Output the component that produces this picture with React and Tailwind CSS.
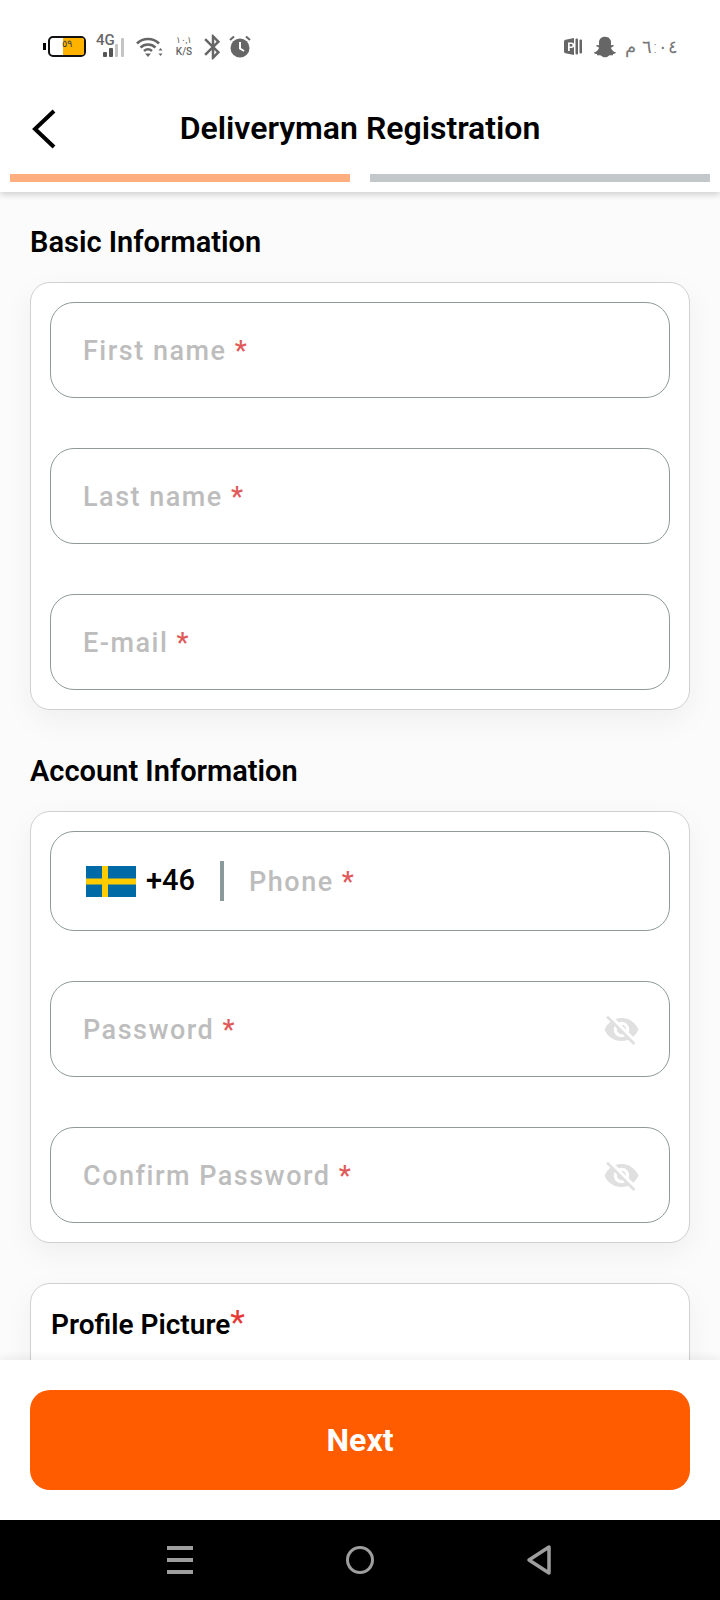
import React from 'react';
import { MdVisibilityOff, MdBluetooth } from 'react-icons/md';
import { FaSnapchatGhost } from 'react-icons/fa';

const Required = ({ children }) => (
  <>
    {children} <span className="text-[#e05a5a]">*</span>
  </>
);

const Field = ({ label, secret }) => (
  <div className="flex h-[96px] items-center justify-between rounded-[24px] border border-[#8f9a9a] bg-white pl-[32px] pr-[29px]">
    <span className="pt-[2px] text-[27px] font-medium tracking-[1.5px] text-[#bdbdbd]">
      <Required>{label}</Required>
    </span>
    {secret && <MdVisibilityOff size={37} className="text-[#e0e0e0]" />}
  </div>
);

const SwedenFlag = () => (
  <svg width="50" height="31" viewBox="0 0 50 31">
    <rect width="50" height="31" fill="#006aa7" />
    <rect x="16" width="6" height="31" fill="#fecc00" />
    <rect y="12.5" width="50" height="6" fill="#fecc00" />
  </svg>
);

const Battery = () => (
  <div className="flex items-center gap-[2px]">
    <div className="h-[7px] w-[3px] bg-black" />
    <div className="relative h-[21px] w-[38px] rounded-[5px] border-2 border-[#111] bg-white">
      <div className="absolute bottom-0 right-0 top-0 w-[21px] rounded-r-[2px] bg-[#ffb300]" />
      <span className="absolute left-[12px] top-[-1px] text-[10px] leading-[14px] text-[#444]">٥٩</span>
    </div>
  </div>
);

const Signal = () => (
  <div className="relative h-[22px] w-[29px]">
    <span className="absolute left-0 top-[-4px] text-[15px] font-medium leading-[16px] text-[#666]">4G</span>
    <svg width="29" height="22" viewBox="0 0 29 22">
      <rect x="7" y="16" width="4" height="5" rx="1" fill="#555" />
      <rect x="13" y="12" width="4" height="9" rx="1" fill="#555" />
      <rect x="19" y="8" width="3" height="13" rx="1" fill="#c4c4c4" />
      <rect x="25" y="2" width="3" height="19" rx="1" fill="#c4c4c4" />
    </svg>
  </div>
);

const Wifi = () => (
  <svg width="27" height="22" viewBox="0 0 27 22">
    <path d="M1 7.5C7 1.5 17 1.5 23 7.5" stroke="#666" strokeWidth="2.6" fill="none" />
    <path d="M4.5 11.5C8.5 7.5 15.5 7.5 19.5 11.5" stroke="#666" strokeWidth="2.6" fill="none" />
    <path d="M8 15C10.5 12.8 13.5 12.8 16 15" stroke="#666" strokeWidth="2.6" fill="none" />
    <path d="M9 17.5h6L12 21z" fill="#666" />
    <path d="M22.5 14.5l2-2.5 2 2.5zM22.5 17.5h4l-2 2.5z" fill="#666" />
  </svg>
);

const Alarm = () => (
  <svg width="22" height="23" viewBox="0 0 22 23">
    <circle cx="11" cy="13" r="9.5" fill="#666" />
    <path d="M11 7v6.5l4 2.5" stroke="#fff" strokeWidth="2" fill="none" />
    <path d="M1 5l4-3.5M21 5l-4-3.5" stroke="#666" strokeWidth="2" fill="none" />
  </svg>
);

const ParkIcon = () => (
  <svg width="19" height="19" viewBox="0 0 19 19">
    <path d="M0 4.5Q0 3 1.5 2.7L10 1v17l-8.5-1.7Q0 16 0 14.5z" fill="#666" />
    <path d="M4 5.5h3.5a2.7 2.7 0 0 1 0 5.4H5.7V14H4zM5.7 7v2.4h1.6a1.2 1.2 0 0 0 0-2.4z" fill="#fff" fillRule="evenodd" />
    <rect x="11.5" y="1.5" width="2.5" height="16" rx="1" fill="#666" />
    <rect x="15.5" y="2.5" width="2.5" height="14" rx="1" fill="#666" />
  </svg>
);

const StatusBar = () => (
  <div className="flex h-[94px] items-center justify-between pb-[1px] pl-[43px] pr-[42px]">
    <div className="flex items-center">
      <Battery />
      <div className="ml-[10px]"><Signal /></div>
      <div className="ml-[11px]"><Wifi /></div>
      <div className="ml-[11px] flex w-[20px] flex-col items-center text-[#666]">
        <span className="text-[9px] leading-[11px]">١٠,١</span>
        <span className="text-[10px] font-medium leading-[12px]">K/S</span>
      </div>
      <MdBluetooth size={30} className="ml-[4px] text-[#666]" />
      <div className="ml-[1px]"><Alarm /></div>
    </div>
    <div className="flex items-center">
      <ParkIcon />
      <FaSnapchatGhost size={22} className="ml-[11px] text-[#666]" />
      <span dir="rtl" className="ml-[9px] font-['DejaVu_Sans',sans-serif] text-[18px] font-light leading-[20px] text-[#777]">٦:٠٤ م</span>
    </div>
  </div>
);

const Header = () => (
  <header className="relative z-10 bg-white shadow-[0_3px_6px_rgba(0,0,0,0.16)]">
    <StatusBar />
    <div className="relative flex h-[70px] items-center justify-center pb-[2px]">
      <svg width="28" height="42" viewBox="0 0 28 42" className="absolute left-[31px] top-[14px]">
        <path d="M23 3L4 21l19 18" stroke="#000" strokeWidth="4" fill="none" />
      </svg>
      <h1 className="text-[32px] font-semibold leading-[36px] text-black">Deliveryman Registration</h1>
    </div>
    <div className="flex gap-[20px] px-[10px] pb-[10px] pt-[10px]">
      <div className="h-[8px] flex-1 bg-[#ffae7f]" />
      <div className="h-[8px] flex-1 bg-[#c3c8cb]" />
    </div>
  </header>
);

const Card = ({ children }) => (
  <div className="flex flex-col gap-[50px] rounded-[20px] border border-[#d0d0d0] bg-white p-[19px] shadow-[0_10px_30px_rgba(0,0,0,0.05)]">
    {children}
  </div>
);

const SectionTitle = ({ children }) => (
  <h2 className="mb-[22px] pt-[1px] text-[29px] font-semibold leading-[35px] text-black">{children}</h2>
);

const PhoneField = () => (
  <div className="flex h-[100px] items-center rounded-[24px] border border-[#8f9a9a] bg-white pl-[35px]">
    <SwedenFlag />
    <span className="ml-[10px] text-[29px] font-medium text-black">+46</span>
    <div className="ml-[25px] h-[40px] w-[4px] bg-[#8a9a9a]" />
    <span className="ml-[25px] pt-[2px] text-[27px] font-medium tracking-[1.5px] text-[#bdbdbd]">
      <Required>Phone</Required>
    </span>
  </div>
);

const NavBar = () => (
  <nav className="flex h-[80px] items-center justify-center bg-black">
    <svg width="400" height="32" viewBox="0 0 400 32">
      <rect x="7" y="2" width="26" height="4" fill="#9e9e9e" />
      <rect x="7" y="14" width="26" height="4" fill="#9e9e9e" />
      <rect x="7" y="26" width="26" height="4" fill="#9e9e9e" />
      <circle cx="200" cy="16" r="12.5" stroke="#9e9e9e" strokeWidth="3" fill="none" />
      <path d="M389 3v26L369 16z" stroke="#9e9e9e" strokeWidth="3.5" strokeLinejoin="round" fill="none" />
    </svg>
  </nav>
);

export default function App() {
  return (
    <div className="flex h-[1600px] w-[720px] flex-col overflow-hidden bg-[#fbfbfb] font-['Roboto',sans-serif]">
      <Header />
      <main className="min-h-0 flex-1 overflow-hidden px-[30px] pt-[32px]">
        <SectionTitle>Basic Information</SectionTitle>
        <Card>
          <Field label="First name" />
          <Field label="Last name" />
          <Field label="E-mail" />
        </Card>

        <div className="mt-[43px]">
          <SectionTitle>Account Information</SectionTitle>
        </div>
        <Card>
          <PhoneField />
          <Field label="Password" secret />
          <Field label="Confirm Password" secret />
        </Card>

        <div className="mt-[40px] h-[200px] rounded-[20px] border border-[#d0d0d0] bg-white py-[19px] pl-[20px] pr-[19px] shadow-[0_10px_30px_rgba(0,0,0,0.05)]">
          <p className="pt-[2px] text-[28px] font-semibold leading-[40px] text-black">
            Profile Picture<span className="text-[34px] font-normal leading-[20px] text-[#e53935]">*</span>
          </p>
        </div>
      </main>
      <footer className="relative z-10 h-[160px] bg-white pl-[30px] pr-[30px] pt-[30px] shadow-[0_-3px_8px_rgba(0,0,0,0.06)]">
        <button className="h-[100px] w-full rounded-[20px] bg-[#ff5c00] text-[32px] font-bold text-white">Next</button>
      </footer>
      <NavBar />
    </div>
  );
}
